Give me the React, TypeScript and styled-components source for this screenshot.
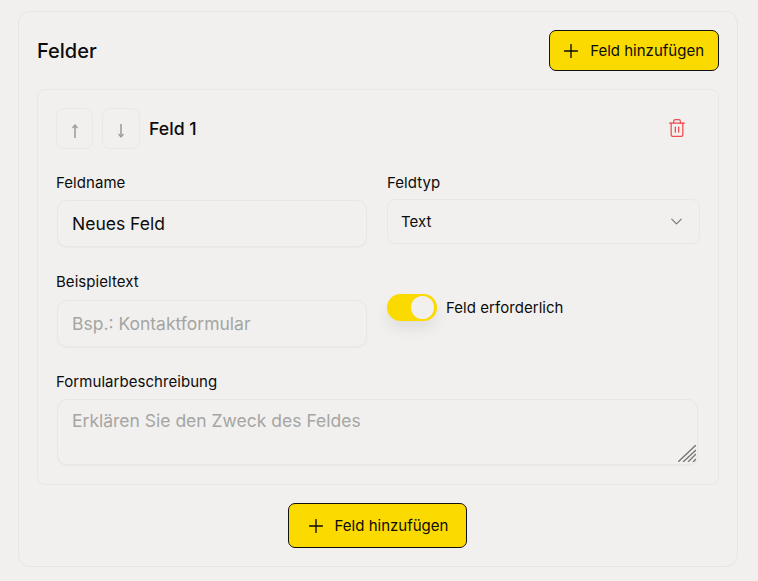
import React from 'react';
import styled, { createGlobalStyle } from 'styled-components';
import { ChevronDown, Plus, Trash2 } from 'lucide-react';

const GlobalStyle = createGlobalStyle`
  html, body {
    margin: 0;
    padding: 0;
    background: #f1f0ee;
    color: #0c0c0c;
    font-family: "Inter", "Liberation Sans", sans-serif;
  }
  * { box-sizing: border-box; }
`;

const Page = styled.div`
  width: 758px;
  height: 581px;
  padding: 11px 20px 14px 18px;
`;

const Card = styled.section`
  height: 556px;
  padding: 18px;
  border: 1px solid #e6e5e3;
  border-radius: 12px;
`;

const Header = styled.header`
  display: flex;
  justify-content: space-between;
  align-items: center;
  margin-bottom: 18px;
`;

const Title = styled.h2`
  margin: 0;
  font-size: 20px;
  font-weight: 500;
`;

const AddButton = styled.button<{ $tall?: boolean }>`
  display: flex;
  align-items: center;
  gap: 8px;
  height: ${p => (p.$tall ? 45 : 41)}px;
  padding: ${p => (p.$tall ? '0 18px 0 16px' : '0 14px 0 10px')};
  border: 1px solid #111;
  border-radius: 7px;
  background: #fbda00;
  color: #0c0c0c;
  font-family: inherit;
  font-size: 15px;
  font-weight: 400;
`;

const FieldCard = styled.div`
  height: 396px;
  padding: 18px 18px 0 18px;
  border: 1px solid #e8e7e5;
  border-radius: 8px;
`;

const FieldHead = styled.div`
  display: flex;
  align-items: center;
  height: 41px;
  margin-bottom: 25px;
`;

const MoveButton = styled.button`
  display: flex;
  align-items: center;
  justify-content: center;
  width: 37px;
  height: 41px;
  margin-right: 9px;
  padding: 4px 0 0;
  border: 1px solid #e9e8e6;
  border-radius: 8px;
  background: transparent;
  color: #9a9a98;
  & + & { width: 38px; }
`;

const FieldName = styled.span`
  font-size: 17.7px;
  font-weight: 500;
`;

const DeleteButton = styled.button`
  display: flex;
  margin-left: auto;
  margin-right: 13px;
  margin-bottom: 1px;
  padding: 0;
  border: 0;
  background: transparent;
  color: #ef4a4f;
`;

const FormGrid = styled.div`
  display: grid;
  grid-template-columns: 310px 313px;
  column-gap: 20px;
  align-items: start;
  margin-left: 1px;
`;

const Column = styled.div<{ $wide?: boolean; $offset?: number }>`
  grid-column: ${p => (p.$wide ? '1 / 3' : 'auto')};
  margin-top: ${p => p.$offset ?? 0}px;
`;

const Label = styled.label<{ $gap?: number; $left?: boolean }>`
  display: block;
  margin-bottom: ${p => p.$gap ?? 8}px;
  margin-left: ${p => (p.$left ? -1 : 0)}px;
  font-size: 15px;
  line-height: 18px;
  letter-spacing: 0.05px;
`;

const TextInput = styled.input`
  display: block;
  width: 100%;
  height: 47px;
  padding: 0 15px 0 14px;
  border: 1px solid #e8e7e5;
  border-radius: 10px;
  background: #f1f0ee;
  box-shadow: 0 1px 2px rgba(0, 0, 0, 0.04);
  color: #0c0c0c;
  font-family: inherit;
  font-size: 17.5px;
  outline: none;
  &::placeholder { color: #a5a5a3; opacity: 1; }
`;

const SelectBox = styled.div`
  display: flex;
  align-items: center;
  justify-content: space-between;
  height: 45px;
  padding: 0 13px;
  border: 1px solid #e8e7e5;
  border-radius: 8px;
  font-size: 15px;
  color: #777775;
  span { color: #0c0c0c; }
`;

const ToggleRow = styled.div`
  display: flex;
  align-items: center;
  gap: 9px;
  font-size: 15px;
  letter-spacing: 0.05px;
`;

const Toggle = styled.span`
  display: flex;
  justify-content: flex-end;
  align-items: center;
  width: 50px;
  height: 27px;
  padding: 3px;
  border-radius: 14px;
  background: #fbda00;
  box-shadow: 0 8px 14px rgba(0, 0, 0, 0.07);
`;

const Knob = styled.span`
  width: 23px;
  height: 23px;
  border-radius: 50%;
  background: #f1f0ee;
`;

const AreaWrap = styled.div`
  position: relative;
  width: 641px;
`;

const TextArea = styled.textarea`
  display: block;
  width: 100%;
  height: 66px;
  padding: 10px 15px 10px 14px;
  border: 1px solid #e8e7e5;
  border-radius: 10px;
  background: #f1f0ee;
  box-shadow: 0 1px 2px rgba(0, 0, 0, 0.04);
  font-family: inherit;
  font-size: 17.5px;
  outline: none;
  resize: none;
  &::placeholder { color: #a5a5a3; opacity: 1; }
`;

const Grip = styled.svg`
  position: absolute;
  right: 2px;
  bottom: 3px;
`;

const Footer = styled.div`
  display: flex;
  justify-content: center;
  margin-top: 18px;
  padding-right: 1px;
`;

const UpArrow = () => (
  <svg width="8" height="14" viewBox="0 0 8 14" fill="none" stroke="currentColor">
    <path d="M4 14V1" strokeWidth="1.5" />
    <path d="M1.5 4 4 1l2.5 3" strokeWidth="1.2" />
  </svg>
);

const DownArrow = () => (
  <svg width="8" height="14" viewBox="0 0 8 14" fill="none" stroke="currentColor">
    <path d="M4 0v13" strokeWidth="1.5" />
    <path d="M1.5 10 4 13l2.5-3" strokeWidth="1.2" />
  </svg>
);

export default function App() {
  return (
    <Page>
      <GlobalStyle />
      <Card>
        <Header>
          <Title>Felder</Title>
          <AddButton>
            <Plus size={22} strokeWidth={1.5} />
            Feld hinzufügen
          </AddButton>
        </Header>
        <FieldCard>
          <FieldHead>
            <MoveButton><UpArrow /></MoveButton>
            <MoveButton><DownArrow /></MoveButton>
            <FieldName>Feld 1</FieldName>
            <DeleteButton><Trash2 size={20} strokeWidth={1.5} /></DeleteButton>
          </FieldHead>
          <FormGrid>
            <Column>
              <Label $left>Feldname</Label>
              <TextInput defaultValue="Neues Feld" />
            </Column>
            <Column>
              <Label $gap={7}>Feldtyp</Label>
              <SelectBox>
                <span>Text</span>
                <ChevronDown size={19} strokeWidth={1.5} />
              </SelectBox>
            </Column>
            <Column $offset={26}>
              <Label $left $gap={9}>Beispieltext</Label>
              <TextInput placeholder="Bsp.: Kontaktformular" />
            </Column>
            <Column $offset={47}>
              <ToggleRow>
                <Toggle><Knob /></Toggle>
                Feld erforderlich
              </ToggleRow>
            </Column>
            <Column $wide $offset={26}>
              <Label $left>Formularbeschreibung</Label>
              <AreaWrap>
                <TextArea placeholder="Erklären Sie den Zweck des Feldes" />
                <Grip width="18" height="17" viewBox="0 0 18 17">
                  <path d="M0 17 18 0M5 17 18 5M10 17l8-8M15 17l3-3" stroke="#777775" strokeWidth="1.4" fill="none" />
                </Grip>
              </AreaWrap>
            </Column>
          </FormGrid>
        </FieldCard>
        <Footer>
          <AddButton $tall>
            <Plus size={22} strokeWidth={1.5} />
            Feld hinzufügen
          </AddButton>
        </Footer>
      </Card>
    </Page>
  );
}
